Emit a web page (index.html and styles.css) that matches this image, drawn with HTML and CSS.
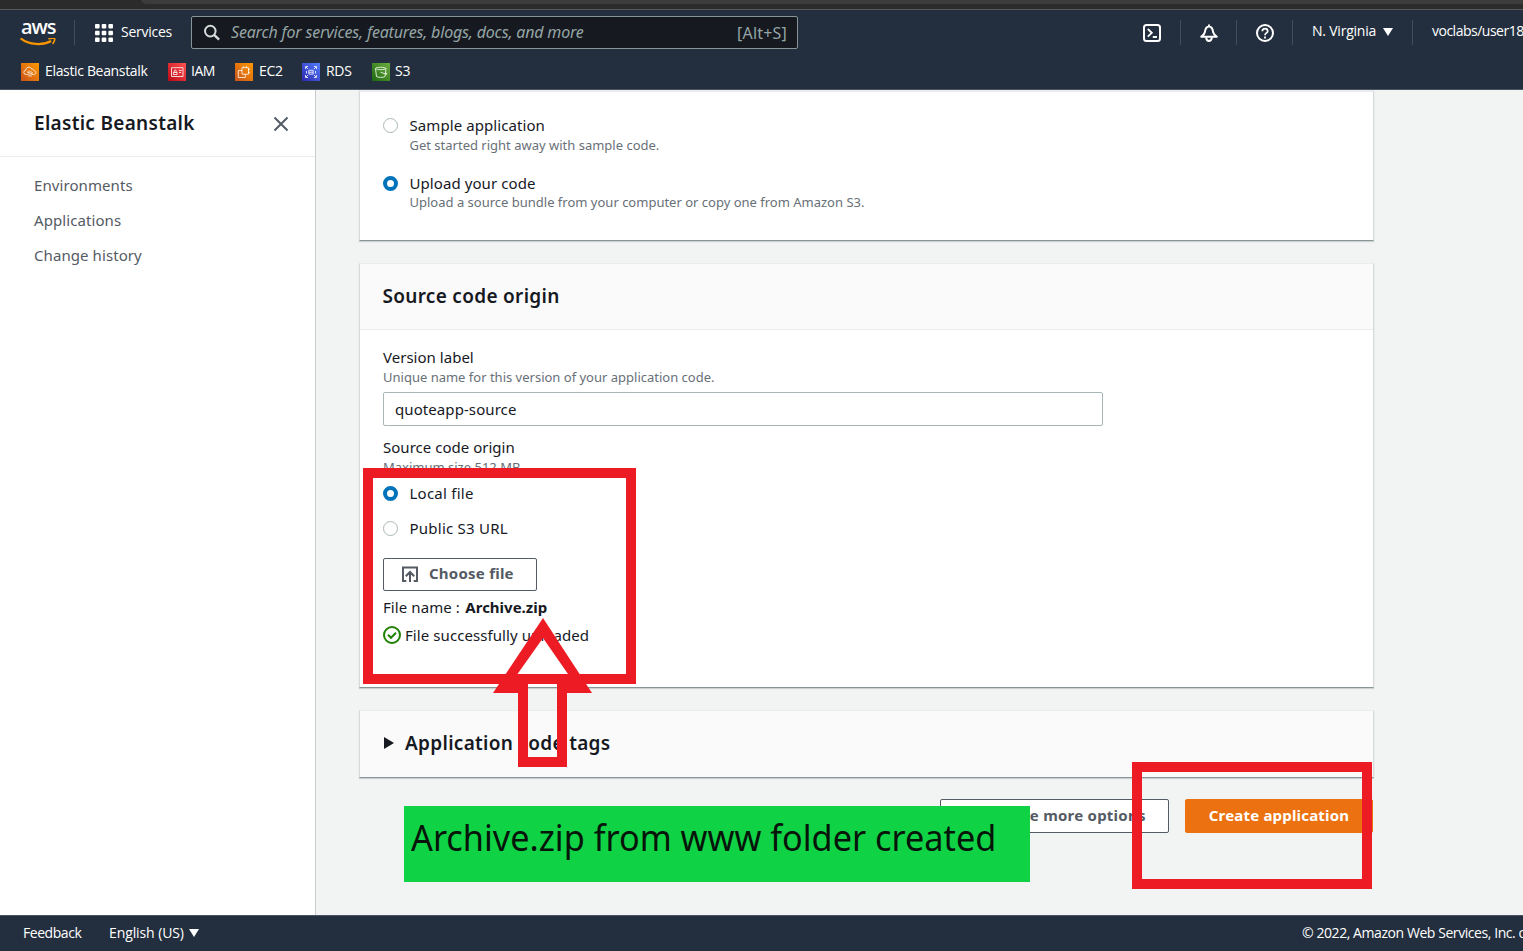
FILE: index.html
```html
<!DOCTYPE html>
<html lang="en">
<head>
<meta charset="utf-8">
<title>Elastic Beanstalk</title>
<link rel="stylesheet" href="styles.css">
</head>
<body>
<div class="browser-strip"><div class="browser-bar"></div></div>
<header class="topnav">
  <div class="nav-row">
    <div class="logo"><span class="logo-text">aws</span>
      <svg class="logo-smile" width="36" height="10" viewBox="0 0 36 10"><path d="M.6.3C9 7 22 7.800 31.200 3" fill="none" stroke="#f79400" stroke-width="2.200"/><path d="M28.500 1C31 0 34.200 0 34.600.7S34 4.500 32.600 6" fill="none" stroke="#f79400" stroke-width="1.700"/></svg>
    </div>
    <i class="sep sep-logo"></i>
    <svg class="grid-icon" width="18" height="18" fill="#fff"><rect width="4.600" height="4.600" rx="1"/><rect x="6.700" width="4.600" height="4.600" rx="1"/><rect x="13.400" width="4.600" height="4.600" rx="1"/><rect y="6.700" width="4.600" height="4.600" rx="1"/><rect x="6.700" y="6.700" width="4.600" height="4.600" rx="1"/><rect x="13.400" y="6.700" width="4.600" height="4.600" rx="1"/><rect y="13.400" width="4.600" height="4.600" rx="1"/><rect x="6.700" y="13.400" width="4.600" height="4.600" rx="1"/><rect x="13.400" y="13.400" width="4.600" height="4.600" rx="1"/></svg>
    <span class="services">Services</span>
    <div class="search">
      <svg width="17" height="17" viewBox="0 0 17 17" fill="none" stroke="#d5dbdb" stroke-width="2"><circle cx="6.300" cy="7.100" r="5.300"/><path d="M10.100 10.900l5 4.800" stroke-width="2.400"/></svg>
      <span class="placeholder">Search for services, features, blogs, docs, and more</span>
      <span class="shortcut">[Alt+S]</span>
    </div>
    <div class="nav-tools">
      <svg class="shell" width="18" height="18" viewBox="0 0 18 18" fill="none" stroke="#fff" stroke-width="2"><rect x="1" y="1" width="16" height="16" rx="2.500"/><path d="M4.800 5l4 3.800-4 3.800M9.800 13h4.200" stroke-width="1.800"/></svg>
      <i class="sep"></i>
      <svg class="tool" width="18" height="18" viewBox="0 0 18 18" fill="none" stroke="#fff" stroke-width="2" stroke-linejoin="round"><path d="M9 .4v2.200M1.200 12.700h15.600C14.500 11 13.400 9.800 13.100 8 12.600 4.600 11.200 2.600 9 2.600S5.400 4.600 4.900 8C4.600 9.800 3.500 11 1.200 12.700z"/><path d="M6.200 13.200c0 5 5.600 5 5.600 0"/></svg>
      <i class="sep"></i>
      <svg class="tool" width="18" height="18" viewBox="0 0 18 18" fill="none" stroke="#fff" stroke-width="2"><circle cx="9" cy="9" r="8"/><path d="M6.300 7.200c0-3.400 5.400-3.400 5.400 0C11.700 9 9 8.800 9 11.200M9 12.400v2" stroke-width="1.800"/></svg>
      <i class="sep"></i>
      <span class="nav-text region">N. Virginia</span>
      <svg class="caret" width="10" height="8"><path d="M0 0h10L5 8z" fill="#fff"/></svg>
      <i class="sep"></i>
      <span class="nav-text user">voclabs/user18</span>
    </div>
  </div>
  <nav class="fav-row">
    <a class="fav fav-eb"><svg class="tile orange" viewBox="0 0 18 18"><path d="M6.800 11.500H5.200a2.200 2.200 0 0 1-.3-4.400C5 5 6.400 4 8 4.200c1.300 0 2.300.8 2.700 1.900 1.400-.2 2 .5 2.100 1.400 2.900.5 2.500 4-.1 4H11M8 13.800V7.500M8 10L5.800 8.700M10 13.800V8M10 10.800l2-1.300"/></svg>Elastic Beanstalk</a>
    <a class="fav fav-iam"><svg class="tile red" viewBox="0 0 18 18"><path d="M3.500 4.700h11.500v8.800H3.500zM5.300 11.600h3.800V9.500H5.300zM6.200 9.400V8c0-1.300 2-1.300 2 0v1.400M11 7.500h2.700M11 9.500h2"/></svg>IAM</a>
    <a class="fav fav-ec2"><svg class="tile orange" viewBox="0 0 18 18"><path d="M7 7.500H3.300v7h7V11.500M7 4.700h6.500v6.500H7zM8.700 3.200v1.500M11.500 3.200v1.500M13.500 6.500H15M13.500 9.300H15"/></svg>EC2</a>
    <a class="fav fav-rds"><svg class="tile blue" viewBox="0 0 18 18"><path d="M3.500 6V3.500H6M12 3.500h2.500V6M3.500 12v2.500H6M12 14.500h2.500V12M4 4l2 2M14 4l-2 2M4 14l2-2M14 14l-2-2M6.800 7.300h4.400v3.800H6.800zM6.800 9.200h4.400M4.500 8v2.500M13.500 8v2.500"/></svg>RDS</a>
    <a class="fav fav-s3"><svg class="tile green" viewBox="0 0 18 18"><path d="M3.500 5.500c0-1.600 10.500-1.600 10.500 0L13 13.500c-1.500 1.200-7 1.200-8.500 0zM3.500 5.500c1.500 1.500 9 1.500 10.500 0M8.500 9.200l6 2.200.3-1.700"/></svg>S3</a>
  </nav>
</header>
<div class="content">
  <aside class="sidebar">
    <div class="side-head"><h2>Elastic Beanstalk</h2>
      <svg width="16" height="16" viewBox="0 0 16 16"><path d="M1.500 1.500l13 13M14.500 1.500l-13 13" stroke="#545b64" stroke-width="2"/></svg></div>
    <ul class="side-list"><li>Environments</li><li>Applications</li><li>Change history</li></ul>
  </aside>
  <main class="main">
    <section class="card card-code">
      <div class="option"><i class="radio"></i><div><div class="label">Sample application</div><div class="hint first">Get started right away with sample code.</div></div></div>
      <div class="option"><i class="radio on"></i><div><div class="label">Upload your code</div><div class="hint">Upload a source bundle from your computer or copy one from Amazon S3.</div></div></div>
    </section>
    <section class="card card-source">
      <div class="card-head"><h2>Source code origin</h2></div>
      <div class="card-body">
        <div class="field-label">Version label</div>
        <div class="field-hint">Unique name for this version of your application code.</div>
        <div class="input">quoteapp-source</div>
        <div class="field-label">Source code origin</div>
        <div class="field-hint size">Maximum size 512 MB</div>
        <div class="option local"><i class="radio on"></i><div class="label wide">Local file</div></div>
        <div class="option s3url"><i class="radio"></i><div class="label wide">Public S3 URL</div></div>
        <div class="button choose"><svg width="16" height="17" viewBox="0 0 16 17" fill="none" stroke="#545b64" stroke-width="2"><path d="M4.300 15H1V1.500h14V15h-3.300M8 16V6M3.800 10.200L8 6l4.200 4.200"/></svg>Choose file</div>
        <div class="file-name">File name : <b>Archive.zip</b></div>
        <div class="success"><svg width="18" height="18" viewBox="0 0 18 18" fill="none" stroke="#1d8102" stroke-width="2"><circle cx="9" cy="9" r="8"/><path d="M5 8.800l3 3 5-5"/></svg>File successfully uploaded</div>
      </div>
    </section>
    <section class="card card-tags"><svg width="10" height="12"><path d="M0 0l10 6-10 6z" fill="#16191f"/></svg><h2>Application code tags</h2></section>
    <div class="actions"><div class="button more">Configure more options</div><div class="button primary">Create application</div></div>
  </main>
</div>
<footer class="footer"><span class="feedback">Feedback</span><span class="lang">English (US)</span><svg class="caret" width="10" height="8"><path d="M0 0h10L5 8z" fill="#fff"/></svg><span class="copyright">© 2022, Amazon Web Services, Inc. o</span></footer>
<div class="note"><span>Archive.zip from www folder created</span></div>
<div class="mark mark-file"></div>
<div class="mark mark-create"></div>
<svg class="arrow" width="100" height="150" viewBox="0 0 100 150"><path fill="#ed1c24" fill-rule="evenodd" d="M50 0L99 75H74V149H25V75H0zM50 20L24.500 56H75zM35 66V139H64V66z"/></svg>
</body>
</html>
```
FILE: styles.css
```css
* { box-sizing: border-box; }
body { margin: 0; width: 1523px; height: 951px; overflow: hidden; position: relative; display: flex; flex-direction: column; font: 15px/20px "Noto Sans", sans-serif; letter-spacing: .08px; color: #16191f; background: #f2f3f3; }
h2 { margin: 0; font-size: 19px; line-height: 24px; font-weight: 600; letter-spacing: .3px; }
svg { display: block; flex: none; }

.browser-strip { height: 10px; flex: none; background: #2b2b2b; border-bottom: 1px solid #55585c; }
.browser-bar { height: 4px; margin-left: 141px; background: #3c3c3c; border-bottom-left-radius: 6px 4px; }

.topnav { height: 80px; flex: none; background: #232f3e; border-bottom: 1px solid #4b535e; color: #fff; font: 500 14px/20px "Open Sans", "Noto Sans", sans-serif; overflow: hidden; }
.nav-row { height: 45px; display: flex; align-items: center; padding-left: 20px; white-space: nowrap; }
.nav-row > * { flex: none; }
.logo { width: 36px; height: 31px; display: flex; flex-direction: column; align-items: flex-start; }
.logo-text { font: 600 20px/19px "Open Sans", sans-serif; letter-spacing: -1.1px; height: 21px; padding-left: 1px; }
.sep { width: 1px; height: 25px; background: #414d5c; flex: none; }
.sep-logo { margin: 0 20px 0 18px; }
.services { margin-left: 8px; width: 70px; letter-spacing: -.25px; position: relative; top: -1px; }
.search { width: 607px; height: 33px; display: flex; align-items: center; border: 1px solid #879596; border-radius: 2px; background: #16191f; padding: 0 10px 0 12px; color: #95a5a6; font: 16px/20px "Noto Sans", sans-serif; }
.placeholder { margin: -1px 0 0 10px; font-style: italic; letter-spacing: -.18px; }
.shortcut { margin-left: auto; font-size: 16px; letter-spacing: .2px; }
.nav-tools { display: flex; align-items: center; margin-left: 345px; }
.shell { margin-right: 19px; }
.tool { margin: 0 18px 0 19px; }
.nav-text { margin-left: 19px; position: relative; top: -2px; flex: none; }
.region { width: 64px; letter-spacing: -.22px; }
.nav-tools .caret { margin: -1px 19px 0 7px; }
.user { letter-spacing: -.5px; }
.fav-row { height: 34px; display: flex; align-items: center; padding-left: 21px; line-height: 18px; }
.fav { display: flex; align-items: center; gap: 6px; height: 18px; padding-bottom: 2px; }
.fav-eb { width: 147px; letter-spacing: -.34px; }
.fav-iam { width: 67px; gap: 5px; letter-spacing: -.45px; }
.fav-ec2 { width: 67px; letter-spacing: -.3px; }
.fav-rds { width: 70px; letter-spacing: -.3px; }
.fav-s3 { gap: 5px; letter-spacing: -.2px; }
.tile { width: 18px; height: 18px; margin-bottom: -2px; fill: none; stroke: #fff; stroke-width: .8; }
.orange { background: linear-gradient(45deg, #c8511b, #f90); }
.red { background: linear-gradient(45deg, #bd0816, #ff5252); }
.blue { background: linear-gradient(45deg, #2e27ad, #527fff); }
.green { background: linear-gradient(45deg, #1b660f, #6cae3e); }

.content { flex: 1; min-height: 0; display: flex; }
.sidebar { width: 316px; flex: none; background: #fff; border-right: 1px solid #c8cccc; }
.side-head { height: 67px; border-bottom: 1px solid #eaeded; display: flex; justify-content: space-between; align-items: center; padding: 0 26px 0 34px; }
.side-head svg { position: relative; top: 1px; }
.side-list { list-style: none; margin: 0; padding: 11px 0 0 34px; line-height: 35px; color: #545b64; }

.main { width: 1015px; margin-left: 43px; }
.card { background: #fff; border: 1px solid #d5dbdb; border-top-color: #eaeded; border-bottom-color: #879596; box-shadow: 0 1px 1px rgba(0, 28, 36, .15); }
.card-code { height: 151px; padding: 23px 23px 0; margin-bottom: 22px; border-top-width: 2px; }
.option { display: flex; gap: 11.5px; }
.radio { width: 15px; height: 15px; margin-top: 3px; border: 1px solid #aab7b8; border-radius: 50%; background: #fff; flex: none; }
.radio.on { border: 4.5px solid #0073bb; }
.card-code .option { height: 58px; }
.hint, .field-hint { font-size: 13px; line-height: 19px; letter-spacing: 0; color: #687078; }
.hint.first { line-height: 21px; }
.wide { letter-spacing: .24px; }
.card-source { height: 425px; margin-bottom: 22px; }
.card-head { height: 66px; padding: 20px 22.5px; background: #fafafa; border-bottom: 1px solid #eaeded; }
.card-body { padding: 17px 23px 0; }
.field-label { line-height: 21px; letter-spacing: .02px; }
.field-hint { height: 24px; }
.field-hint.size { height: 25px; }
.input { width: 720px; height: 34px; margin-bottom: 11px; padding: 0 11px; border: 1px solid #aab7b8; border-radius: 2px; line-height: 32px; }
.local { height: 35px; }
.s3url { height: 40px; }
.button { border: 1px solid #545b64; border-radius: 2px; background: #fff; color: #545b64; font-weight: 700; letter-spacing: .23px; }
.choose { width: 154px; height: 33px; display: flex; align-items: center; gap: 11px; padding: 0 0 3px 18px; }
.choose svg { margin-top: 3px; }
.file-name { margin-top: 6px; white-space: pre; }
.file-name b { letter-spacing: 0; margin-left: 1.5px; }
.success { display: flex; align-items: center; gap: 4px; margin-top: 8px; }
.card-tags { height: 68px; display: flex; align-items: center; gap: 11px; padding: 0 0 2px 24px; background: #fafafa; }
.actions { display: flex; justify-content: flex-end; gap: 16px; margin: 21px 1px 0 0; }
.actions .button { height: 34px; line-height: 31px; text-align: center; white-space: nowrap; }
.more { width: 229px; }
.actions .primary { width: 188px; background: #ec7211; border-color: #ec7211; color: #fff; letter-spacing: .19px; }

.footer { height: 36px; flex: none; display: flex; align-items: center; padding: 0 0 2px 23px; background: #232f3e; border-top: 1px solid #4b535e; color: #fff; font: 500 14px/20px "Open Sans", "Noto Sans", sans-serif; letter-spacing: -.45px; white-space: nowrap; overflow: hidden; }
.footer > * { flex: none; }
.feedback { width: 86px; }
.lang { width: 75px; letter-spacing: -.1px; }
.footer .caret { margin-left: 5px; }
.copyright { margin-left: 1103px; letter-spacing: -.43px; }

/* Annotations drawn over the console */
.note { position: absolute; left: 404px; top: 806px; width: 626px; height: 76px; background: #10d245; color: #06140a; }
.note span { display: block; transform-origin: 0 0; transform: scaleX(.926); font-size: 37px; line-height: 60px; letter-spacing: 0; margin: 1px 0 0 7px; white-space: nowrap; }
.mark { position: absolute; border: 10px solid #ed1c24; }
.mark-file { left: 363px; top: 468px; width: 273px; height: 216px; }
.mark-create { left: 1132px; top: 762px; width: 240px; height: 127px; }
.arrow { position: absolute; left: 493px; top: 618px; }
```
